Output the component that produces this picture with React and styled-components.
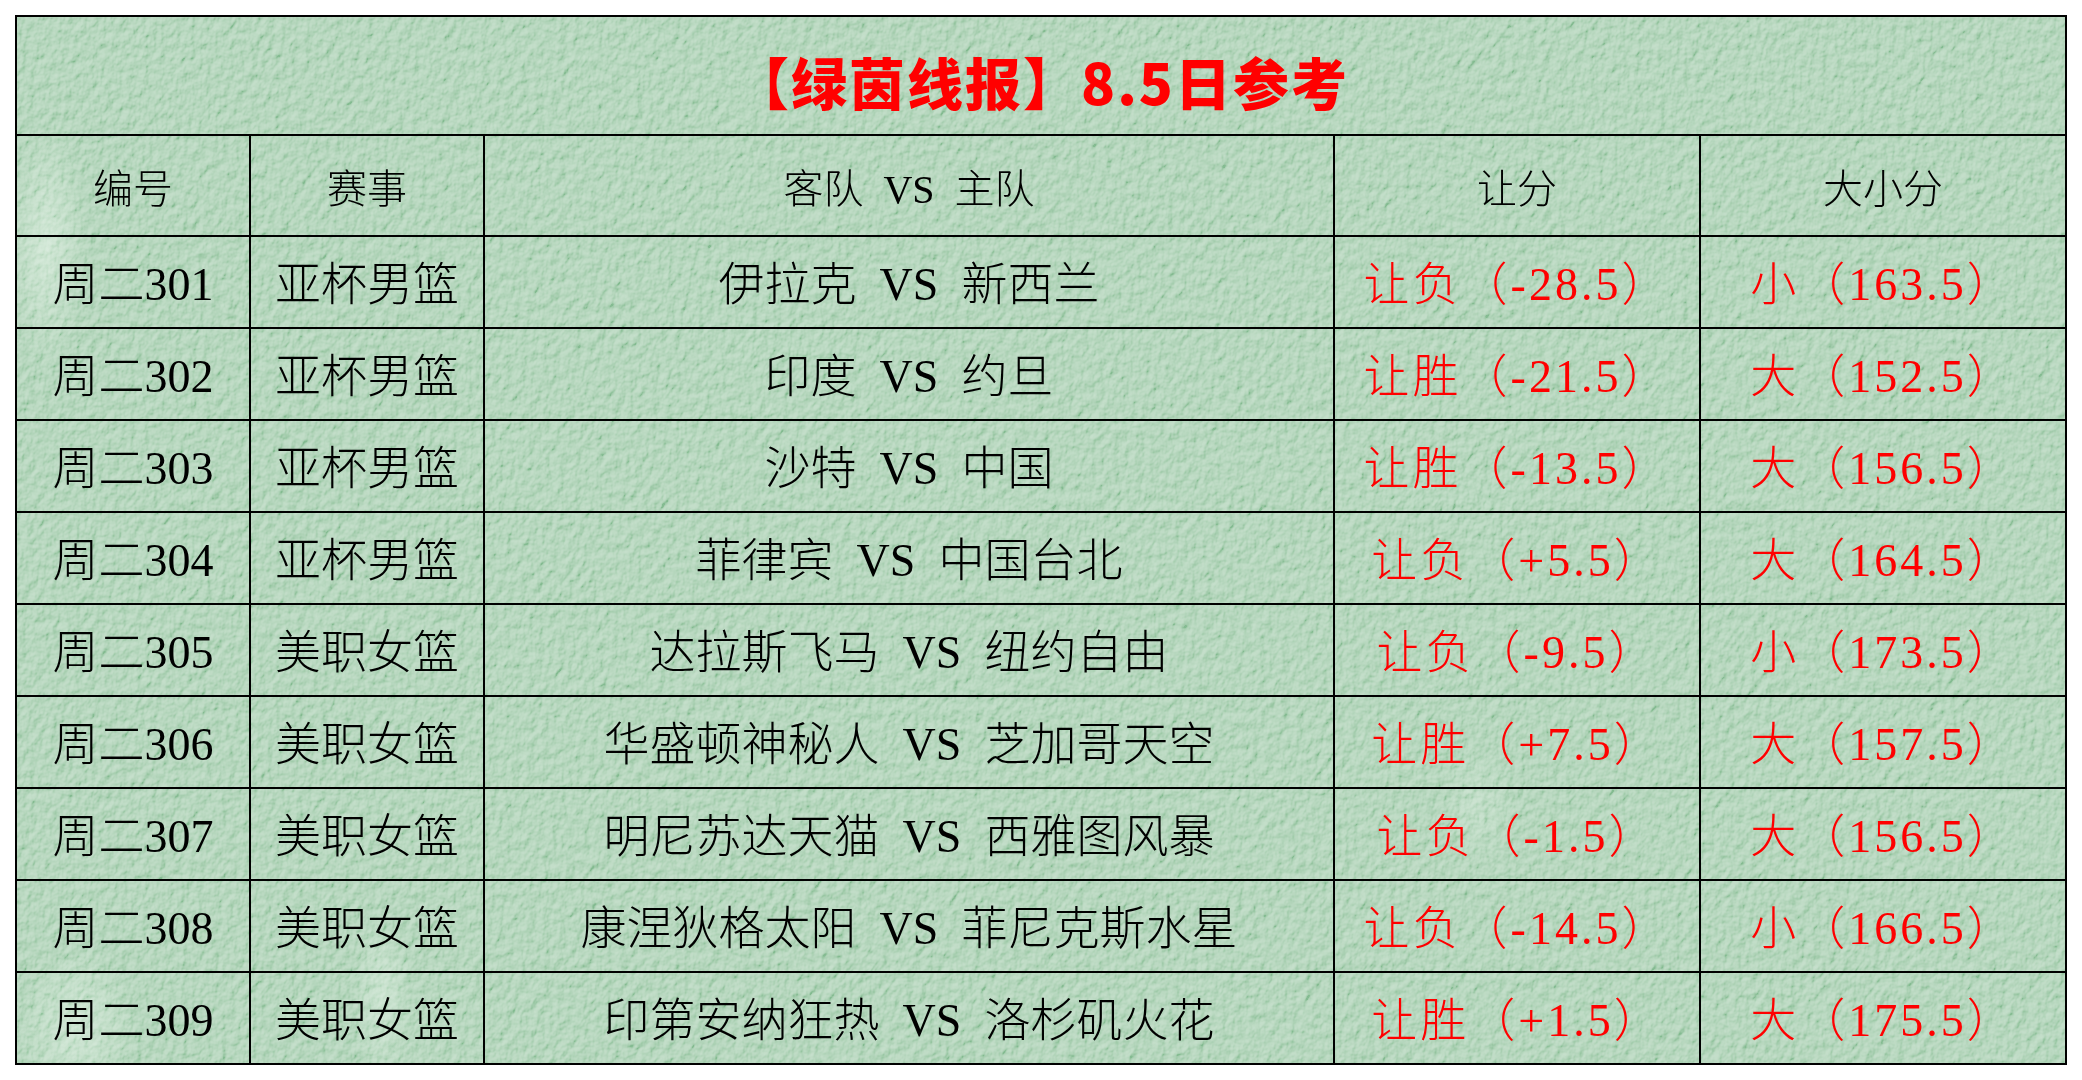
import React from "react";
import styled, { createGlobalStyle } from "styled-components";

const GlobalStyle = createGlobalStyle`
  html, body { margin: 0; padding: 0; background: #ffffff; }
  body { font-family: "Liberation Serif", "Noto Sans CJK SC", serif; }
`;

const Page = styled.div`
  width: 2082px;
  height: 1080px;
  padding: 15px 0 0 15px;
  box-sizing: border-box;
`;

const Board = styled.div`
  position: relative;
  display: grid;
  grid-template-columns: 234px 234px 850px 366px 366px;
  grid-template-rows: 119px 101px repeat(9, 92px);
  width: 2052px;
  box-sizing: border-box;
  border-left: 2px solid #000;
  border-top: 2px solid #000;
  background-color: #a6ceaf;
  background-image:
    radial-gradient(ellipse 40px 120px at 30px 230px, rgba(225, 242, 228, 0.55), rgba(225, 242, 228, 0) 100%),
    radial-gradient(ellipse 60px 80px at 60px 1010px, rgba(225, 242, 228, 0.5), rgba(225, 242, 228, 0) 100%),
    radial-gradient(ellipse 30px 90px at 365px 980px, rgba(225, 242, 228, 0.45), rgba(225, 242, 228, 0) 100%),
    radial-gradient(ellipse 40px 60px at 1460px 790px, rgba(225, 242, 228, 0.25), rgba(225, 242, 228, 0) 100%);
  overflow: hidden;
`;

const Texture = styled.svg`
  position: absolute;
  inset: 0;
  width: 100%;
  height: 100%;
  pointer-events: none;
  mix-blend-mode: overlay;
  opacity: 0.38;
  z-index: 0;
`;

const Cell = styled.div`
  position: relative;
  z-index: 1;
  display: flex;
  align-items: center;
  justify-content: center;
  box-sizing: border-box;
  border-right: 2px solid #000;
  border-bottom: 2px solid #000;
  padding-top: ${(p) => p.$shift || 6}px;
  font-family: "Liberation Serif", "Noto Sans CJK SC", serif;
  font-weight: 300;
  font-size: ${(p) => p.$size || 46}px;
  line-height: 1;
  letter-spacing: ${(p) => (p.$red ? 3 : 0)}px;
  color: ${(p) => (p.$red ? "#ff0000" : "#000000")};
  white-space: pre;
  word-spacing: 0.25em;
`;

const TitleCell = styled(Cell)`
  grid-column: 1 / -1;
  padding-top: 10px;
  font-family: "Noto Sans CJK SC", sans-serif;
  font-weight: 900;
  font-size: 56px;
  color: #ff0000;
  letter-spacing: 2px;
`;

const headers = ["编号", "赛事", "客队 VS 主队", "让分", "大小分"];

const rows = [
  ["周二301", "亚杯男篮", "伊拉克", "新西兰", "让负（-28.5）", "小（163.5）"],
  ["周二302", "亚杯男篮", "印度", "约旦", "让胜（-21.5）", "大（152.5）"],
  ["周二303", "亚杯男篮", "沙特", "中国", "让胜（-13.5）", "大（156.5）"],
  ["周二304", "亚杯男篮", "菲律宾", "中国台北", "让负（+5.5）", "大（164.5）"],
  ["周二305", "美职女篮", "达拉斯飞马", "纽约自由", "让负（-9.5）", "小（173.5）"],
  ["周二306", "美职女篮", "华盛顿神秘人", "芝加哥天空", "让胜（+7.5）", "大（157.5）"],
  ["周二307", "美职女篮", "明尼苏达天猫", "西雅图风暴", "让负（-1.5）", "大（156.5）"],
  ["周二308", "美职女篮", "康涅狄格太阳", "菲尼克斯水星", "让负（-14.5）", "小（166.5）"],
  ["周二309", "美职女篮", "印第安纳狂热", "洛杉矶火花", "让胜（+1.5）", "大（175.5）"],
];

export default function App() {
  return (
    <>
      <GlobalStyle />
      <Page>
        <Board>
          <Texture aria-hidden="true">
            <filter id="paper" x="0" y="0" width="100%" height="100%">
              <feTurbulence type="fractalNoise" baseFrequency="0.13 0.1" numOctaves="3" seed="7" result="noise" />
              <feDiffuseLighting in="noise" lightingColor="#ffffff" surfaceScale="2.5" result="lit">
                <feDistantLight azimuth="235" elevation="32" />
              </feDiffuseLighting>
            </filter>
            <rect width="100%" height="100%" filter="url(#paper)" />
          </Texture>
          <TitleCell>【绿茵线报】8.5日参考</TitleCell>
          {headers.map((h) => (
            <Cell key={h} $size={40} $shift={8}>
              {h}
            </Cell>
          ))}
          {rows.map((r) => (
            <React.Fragment key={r[0]}>
              <Cell>{r[0]}</Cell>
              <Cell>{r[1]}</Cell>
              <Cell>{`${r[2]} VS ${r[3]}`}</Cell>
              <Cell $red>{r[4]}</Cell>
              <Cell $red>{r[5]}</Cell>
            </React.Fragment>
          ))}
        </Board>
      </Page>
    </>
  );
}
